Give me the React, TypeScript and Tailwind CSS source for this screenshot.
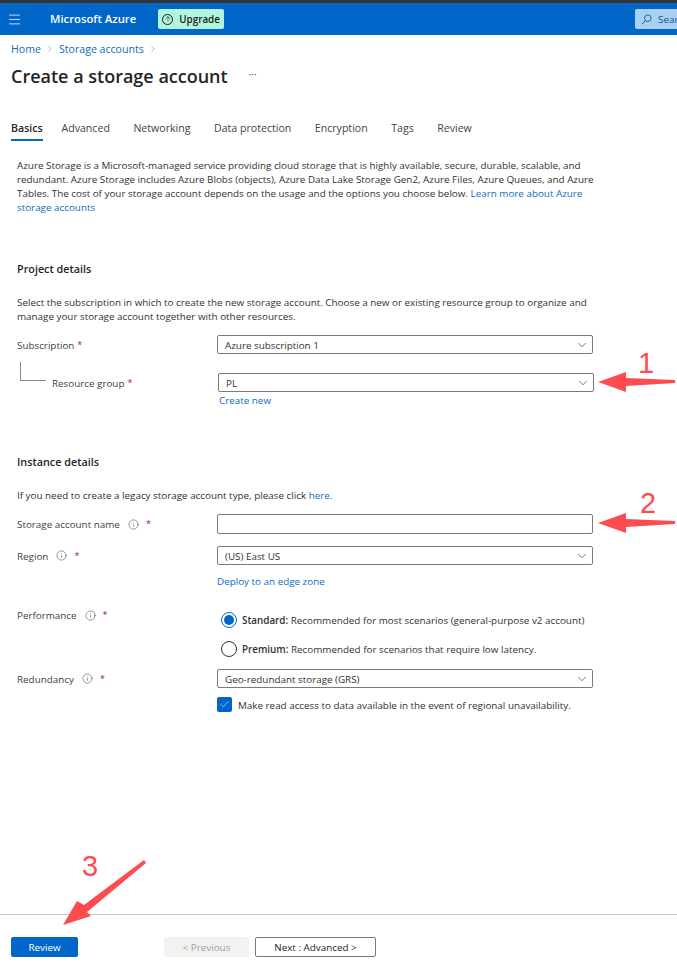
import React from 'react';
import { ChevronDown, ChevronRight, Check, Info, Menu, ArrowUp } from 'lucide-react';

const tabs = ['Basics', 'Advanced', 'Networking', 'Data protection', 'Encryption', 'Tags', 'Review'];

const Star = () => <span className="text-[#a4262c] text-[9px] ml-[3px]">*</span>;

const Tip = () => <Info size={11} strokeWidth={1.2} className="ml-2 mr-[4px] text-[#444]" />;

const Select = ({ value }: { value: string }) => (
  <div className="w-[376px] h-[19px] shrink-0 border border-[#7a7a7a] rounded-[2px] flex items-center justify-between pl-[7px] pr-[3px]">
    <span className="text-[#323130]">{value}</span>
    <ChevronDown size={14} strokeWidth={1.2} className="text-[#444]" />
  </div>
);

const Label = ({ children }: { children: React.ReactNode }) => (
  <div className="w-[200px] flex items-center text-[#404040]">{children}</div>
);

const arrowPoints = '1,16 29,6 29,12 78,14 78,17 29,20 29,26';

const RedArrow = ({ className }: { className: string }) => (
  <svg className={`absolute ${className}`} width="80" height="30" viewBox="0 0 80 30">
    <polygon points={arrowPoints} fill="#fc4c50" />
  </svg>
);

export default function App() {
  return (
    <div className="relative w-[677px] h-[970px] overflow-hidden bg-white text-[9.85px] leading-[14px] text-[#323130] font-['Open_Sans','Noto_Sans',sans-serif]">
      <div className="h-[3px] bg-[#333]" />
      <div className="h-[32px] bg-[#0067c8] flex items-center text-white">
        <Menu size={15} strokeWidth={1.2} className="ml-[7px]" />
        <span className="ml-[28px] text-[11.3px] font-semibold">Microsoft Azure</span>
        <div className="ml-[22px] h-[20px] w-[66px] rounded-[2px] bg-[#b2f5df] flex items-center text-[#1b1b1b] font-semibold">
          <span className="ml-[4px] w-[11px] h-[11px] rounded-full border border-[#1b1b1b] flex items-center justify-center">
            <ArrowUp size={8} strokeWidth={1.5} />
          </span>
          <span className="ml-[6px]">Upgrade</span>
        </div>
        <div className="ml-auto w-[42px] h-[20px] bg-[#a9d0f0] rounded-l-[2px] flex items-center text-[#15568f] overflow-hidden">
          <svg className="ml-[6px] shrink-0" width="11" height="11" viewBox="0 0 11 11" fill="none" stroke="currentColor" strokeWidth="0.9">
            <circle cx="6.8" cy="4.2" r="3.3" />
            <path d="M4.4 6.6 L0.8 10.2" />
          </svg>
          <span className="ml-[6px] whitespace-nowrap">Search</span>
        </div>
      </div>

      <div className="flex items-center h-[14px] mt-[7px] ml-[11px] text-[10.6px] text-[#0f6cbd]">
        <span>Home</span>
        <ChevronRight size={10} strokeWidth={1} className="mx-[4px] text-[#555]" />
        <span>Storage accounts</span>
        <ChevronRight size={10} strokeWidth={1} className="mx-[4px] text-[#555]" />
      </div>

      <div className="flex items-center h-[26px] mt-[7px] ml-[11px]">
        <h1 className="text-[18px] font-semibold text-[#252423]">Create a storage account</h1>
        <span className="ml-[21px] text-[#444] text-[10px] -mt-[4px]">···</span>
      </div>

      <div className="flex mt-[32px] ml-[11px] h-[25px] text-[10.6px] text-[#444] gap-[23.5px]">
        {tabs.map((t, i) => (
          <div key={t} className={i === 0 ? 'h-[20px] w-[32px] -mr-[5px] border-b-2 border-[#0067c8] font-semibold text-[#252423]' : ''}>
            {t}
          </div>
        ))}
      </div>

      <div className="ml-[17px] mt-[12px] w-[577px]">
        <p>
          Azure Storage is a Microsoft-managed service providing cloud storage that is highly available, secure, durable, scalable, and redundant. Azure Storage includes Azure Blobs (objects), Azure Data Lake Storage Gen2, Azure Files, Azure Queues, and Azure Tables. The cost of your storage account depends on the usage and the options you choose below. <span className="text-[#0f6cbd]">Learn more about Azure storage accounts</span>
        </p>

        <h2 className="mt-[48px] text-[10.8px] font-semibold text-[#252423]">Project details</h2>
        <p className="mt-[19px]">
          Select the subscription in which to create the new storage account. Choose a new or existing resource group to organize and manage your storage account together with other resources.
        </p>

        <div className="mt-[12px] flex items-center">
          <Label>Subscription<Star /></Label>
          <Select value="Azure subscription 1" />
        </div>
        <div className="relative mt-[19px] flex items-center">
          <div className="absolute left-[3px] -top-[11px] w-[26px] h-[19px] border-l border-b border-[#8a8886]" />
          <div className="w-[201px] shrink-0 pl-[35px] flex items-center text-[#404040]">Resource group<Star /></div>
          <Select value="PL" />
        </div>
        <div className="ml-[202px] mt-[1px] text-[#0f6cbd]">Create new</div>

        <h2 className="mt-[48px] text-[10.8px] font-semibold text-[#252423]">Instance details</h2>
        <p className="mt-[19px]">If you need to create a legacy storage account type, please click <span className="text-[#0f6cbd]">here.</span></p>

        <div className="mt-[12px] flex items-center">
          <Label>Storage account name<Tip /><Star /></Label>
          <div className="w-[376px] h-[20px] shrink-0 border border-[#7a7a7a] rounded-[2px]" />
        </div>
        <div className="mt-[12px] flex items-center">
          <Label>Region<Tip /><Star /></Label>
          <Select value="(US) East US" />
        </div>
        <div className="ml-[200px] mt-[9px] text-[#0f6cbd]">Deploy to an edge zone</div>

        <div className="mt-[24px] flex">
          <div className="w-[200px] -mt-[4px] h-[14px]"><Label>Performance<Tip /><Star /></Label></div>
          <div className="flex flex-col ml-[4px] gap-[13px]">
            <div className="flex items-center gap-[5px]">
              <span className="w-[16px] h-[16px] rounded-full border border-[#0067c8] flex items-center justify-center">
                <span className="w-[10px] h-[10px] rounded-full bg-[#0067c8]" />
              </span>
              <span><b className="font-semibold">Standard:</b> Recommended for most scenarios (general-purpose v2 account)</span>
            </div>
            <div className="flex items-center gap-[5px]">
              <span className="w-[16px] h-[16px] rounded-full border border-[#323130]" />
              <span><b className="font-semibold">Premium:</b> Recommended for scenarios that require low latency.</span>
            </div>
          </div>
        </div>

        <div className="mt-[12px] flex items-center">
          <Label>Redundancy<Tip /><Star /></Label>
          <Select value="Geo-redundant storage (GRS)" />
        </div>
        <div className="ml-[200px] mt-[9px] flex items-center gap-[6px]">
          <span className="w-[15px] h-[15px] rounded-[2px] bg-[#0067c8] flex items-center justify-center">
            <Check size={11} strokeWidth={1.2} className="text-white" />
          </span>
          <span>Make read access to data available in the event of regional unavailability.</span>
        </div>
      </div>

      <div className="absolute left-0 right-0 bottom-0 h-[56px] border-t border-[#c8c6c4] flex items-start pl-[11px] pt-[22px]">
        <button className="w-[67px] h-[20px] bg-[#0067c8] text-white font-medium rounded-[2px]">Review</button>
        <button className="ml-[86px] w-[85px] h-[20px] bg-[#f3f2f1] text-[#a19f9d] font-medium rounded-[2px]">&lt; Previous</button>
        <button className="ml-[6px] w-[121px] h-[20px] border border-[#7a7a7a] text-[#252423] font-medium rounded-[2px]">Next : Advanced &gt;</button>
      </div>

      {/* red annotations on top of the form */}
      <RedArrow className="left-[597px] top-[366px]" />
      <RedArrow className="left-[597px] top-[507px]" />
      <svg className="absolute left-[58px] top-[856px]" width="92" height="72" viewBox="0 0 92 72">
        <polygon points="5,69 19,45 26,49 86,4 88,7 29,56 33,60" fill="#fc4c50" />
      </svg>
      <span className="absolute left-[638px] top-[345px] text-[29px] leading-[36px] text-[#fc4c50] font-['Liberation_Sans',sans-serif]">1</span>
      <span className="absolute left-[640px] top-[485px] text-[29px] leading-[36px] text-[#fc4c50] font-['Liberation_Sans',sans-serif]">2</span>
      <span className="absolute left-[82px] top-[848px] text-[29px] leading-[36px] text-[#fc4c50] font-['Liberation_Sans',sans-serif]">3</span>
    </div>
  );
}
